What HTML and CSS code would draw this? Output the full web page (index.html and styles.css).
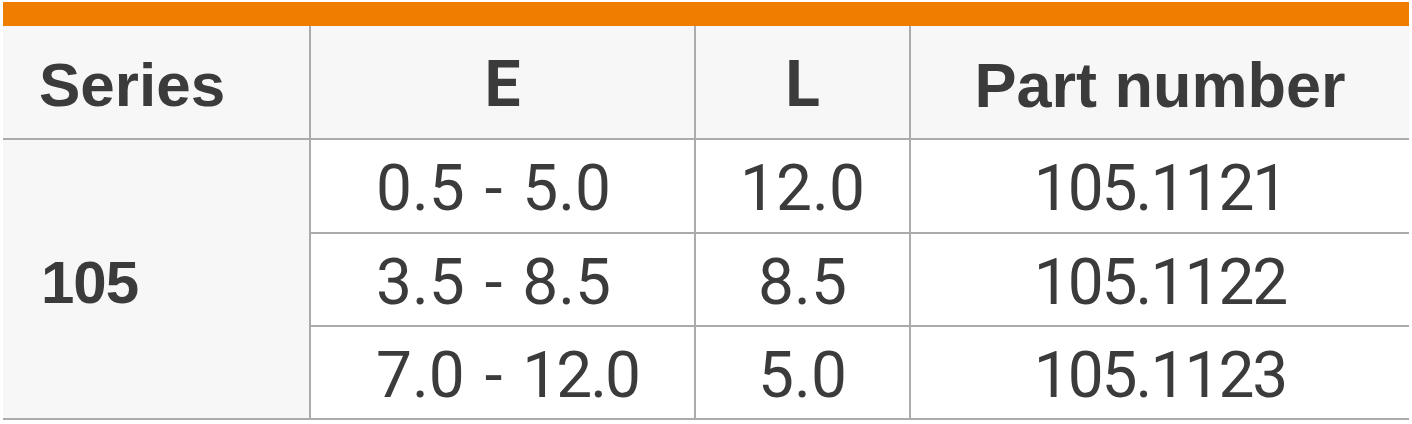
FILE: index.html
```html
<!DOCTYPE html>
<html lang="en">
<head>
<meta charset="utf-8">
<title>Series 105</title>
<link rel="stylesheet" href="styles.css">
</head>
<body>
<div class="wrap">
  <div class="topbar"></div>
  <div class="grid">
    <div class="cell head left">Series</div>
    <div class="cell head center letter">E</div>
    <div class="cell head center letter">L</div>
    <div class="cell head center wide">Part number</div>

    <div class="cell series">105</div>
    <div class="cell data range">0.5 - 5.0</div>
    <div class="cell data center">12.0</div>
    <div class="cell data center part">105.1121</div>

    <div class="cell data range">3.5 - 8.5</div>
    <div class="cell data center">8.5</div>
    <div class="cell data center part">105.1122</div>

    <div class="cell data range"><span>7.0 - <span class="tight">12.0</span></span></div>
    <div class="cell data center">5.0</div>
    <div class="cell data center part">105.1123</div>
  </div>
</div>
</body>
</html>
```
FILE: styles.css
```css
html, body {
  margin: 0;
  padding: 0;
  background: #ffffff;
}

.wrap {
  padding: 2px 3px 0 3px;
  width: 1406px;
}

.topbar {
  height: 24px;
  background: #ef7d00;
}

.grid {
  display: grid;
  grid-template-columns: 306px 383px 213px 498px;
  grid-template-rows: 112px 92px 91px 91px;
  gap: 2px;
  padding-bottom: 2px;
  background: #ababab;
  color: #3b3b3b;
}

.cell {
  display: flex;
  align-items: center;
  padding-top: 6px;
  box-sizing: border-box;
  line-height: 1;
  font-size: 64px;
  white-space: nowrap;
}

.head {
  background: #f7f7f7;
  font-family: "Liberation Sans", Arial, sans-serif;
  font-weight: 700;
  font-size: 62px;
}

.head.wide {
  font-size: 63px;
}

.head.letter {
  font-family: Roboto, "Liberation Sans", sans-serif;
  font-weight: 700;
  font-size: 64px;
}

.left {
  padding-left: 36px;
}

.center {
  justify-content: center;
}

.series {
  grid-row: 2 / span 3;
  background: #f7f7f7;
  padding-left: 38px;
  padding-top: 8px;
  font-family: "Liberation Sans", Arial, sans-serif;
  font-weight: 700;
  font-size: 60px;
  letter-spacing: -1px;
}

.data {
  background: #ffffff;
  font-family: Roboto, "Liberation Sans", sans-serif;
  font-weight: 400;
}

.part {
  letter-spacing: -2px;
}

.range {
  padding-left: 65px;
  word-spacing: 4px;
}

.tight {
  letter-spacing: -2px;
}
```
